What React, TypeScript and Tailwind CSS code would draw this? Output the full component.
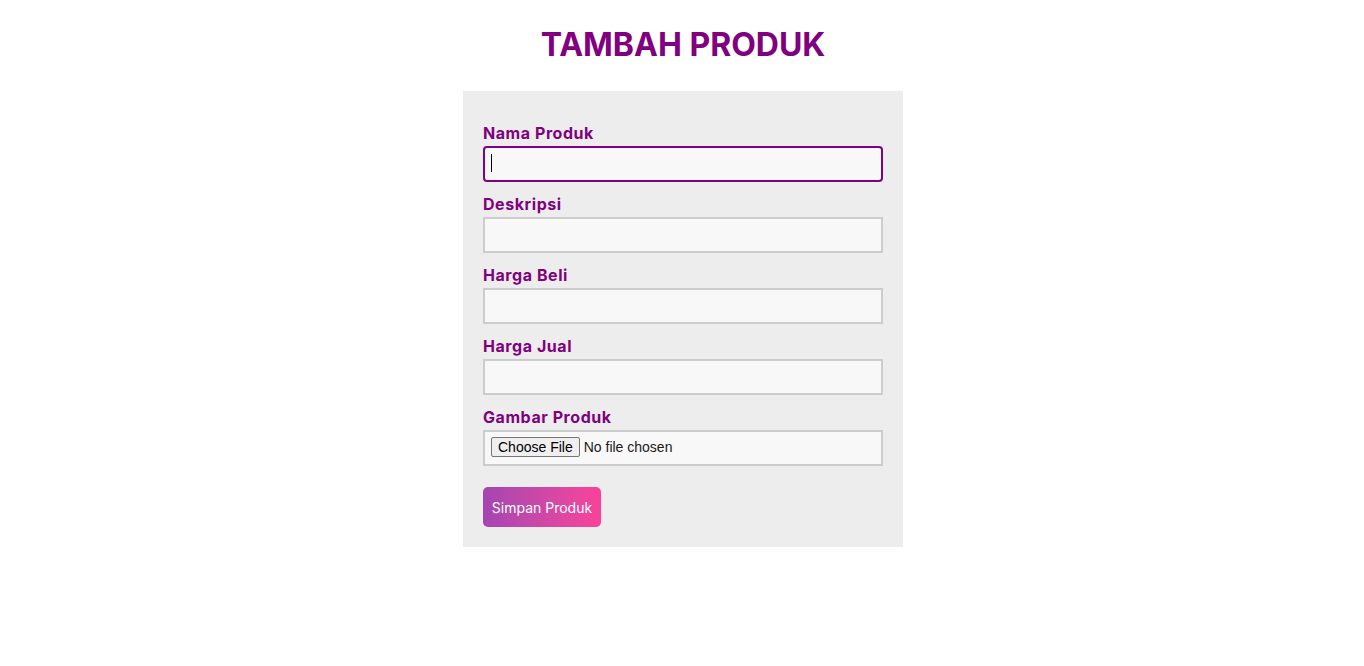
import React from 'react'

const fields = ['Nama Produk', 'Deskripsi', 'Harga Beli', 'Harga Jual']

const labelClass =
  "block mb-[1px] text-[16px] leading-[24px] font-bold tracking-[0.035em] text-[#800080]"

const App = (): JSX.Element => {
  return (
    <div className="min-h-screen bg-white pl-[2px] font-['Inter',sans-serif]">
      <h1 className="pt-[21px] pb-[22px] text-center text-[32px] leading-[48px] font-bold text-[#800080]">
        TAMBAH PRODUK
      </h1>
      <form className="mx-auto w-[440px] bg-[#ededed] px-[20px] pt-[20px] pb-[20px]">
        {fields.map((name, i) => (
          <div key={name} className="mt-[10px]">
            <label className={labelClass}>{name}</label>
            {i === 0 ? (
              <div className="relative">
                <input
                  type="text"
                  className="block h-[36px] w-full rounded-[4px] border-2 border-[#800080] bg-[#f8f8f8] px-[7px] text-[14px] outline-none"
                />
                <span className="absolute left-[8px] top-[8px] h-[18px] w-[1px] bg-black" />
              </div>
            ) : (
              <input
                type="text"
                className="block h-[36px] w-full border-2 border-[#cccccc] bg-[#f8f8f8] px-[7px] text-[14px] outline-none"
              />
            )}
          </div>
        ))}
        <div className="mt-[10px]">
          <label className={labelClass}>Gambar Produk</label>
          <input
            type="file"
            className="block h-[36px] w-full border-2 border-[#cccccc] bg-[#f8f8f8] px-[6px] py-[5px] font-['Liberation_Sans',Arial,sans-serif] text-[14px] leading-[16px] text-[#1a1a1a] file:mr-[4px] file:rounded-[2px] file:border file:border-[#767676] file:bg-[#efefef] file:px-[6px] file:py-[1px] file:text-black"
          />
        </div>
        <button
          type="button"
          className="mt-[21px] h-[40px] w-[118px] rounded-[5px] bg-gradient-to-r from-[#a445b2] to-[#fa4299] text-[14px] text-white"
        >
          Simpan Produk
        </button>
      </form>
    </div>
  )
}

export default App
